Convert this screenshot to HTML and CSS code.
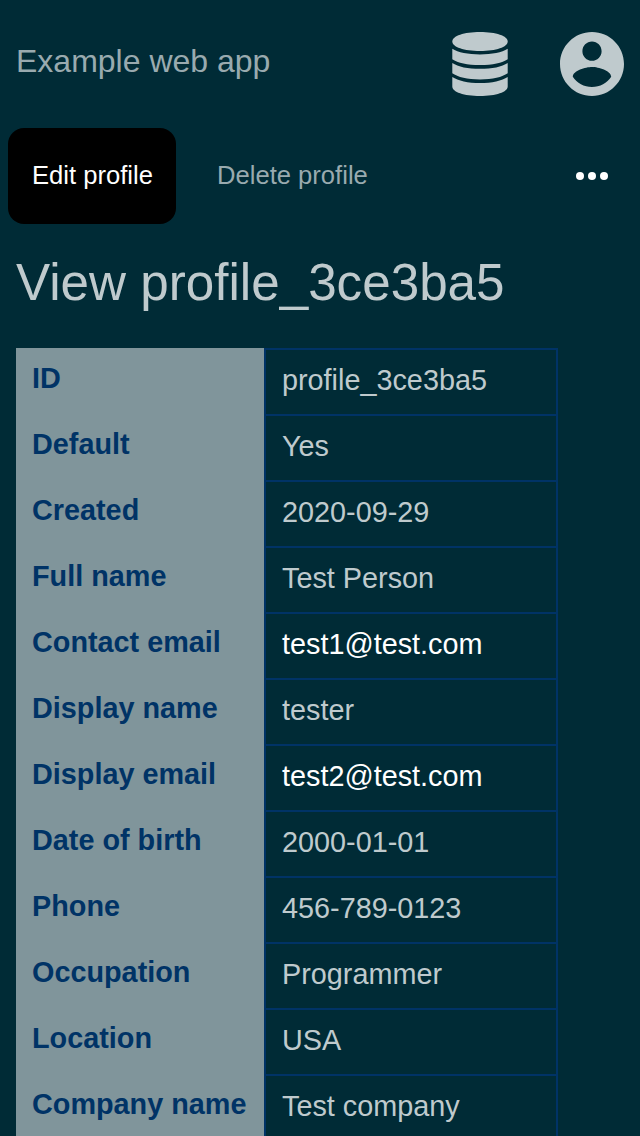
FILE: index.html
```html
<!DOCTYPE html>
<html lang="en">
<head>
<meta charset="utf-8">
<title>View profile_3ce3ba5</title>
<link rel="stylesheet" href="styles.css">
</head>
<body>
<header class="topbar">
  <span class="brand">Example web app</span>
  <nav class="icons">
    <svg class="icon" viewBox="0 0 64 64" aria-label="Database"><path d="M4.300 9.500C4.300 4 16 0 32 0s27.700 4 27.700 9.500C59.700 15 48 19 32 19S4.300 15 4.300 9.500z"/><path d="M4.300 16.700C10 20.300 20 22.400 32 22.400s22-2.100 27.700-5.700V27.200c-5.500 3.600-15 5.800-27.700 5.800S9.800 30.800 4.300 27.200z"/><path d="M4.300 30.900C10 34.800 20 36.800 32 36.800s22-2 27.700-5.900V41.200c-5.500 3.800-15 6.200-27.700 6.200S9.800 45 4.300 41.200z"/><path d="M4.300 44.900C10 48.600 20 51 32 51s22-2.400 27.700-6.100v9.600C59.700 60 48 64 32 64S4.300 60 4.300 54.500z"/></svg>
    <svg class="icon" viewBox="2 2 20 20" aria-label="Account"><path d="M12 2C6.480 2 2 6.480 2 12s4.480 10 10 10 10-4.480 10-10S17.520 2 12 2zm0 3c1.660 0 3 1.340 3 3s-1.340 3-3 3-3-1.340-3-3 1.340-3 3-3zm0 14.200c-2.500 0-4.710-1.280-6-3.220.030-1.990 4-3.080 6-3.080 1.990 0 5.970 1.090 6 3.080-1.290 1.940-3.500 3.220-6 3.220z"/></svg>
  </nav>
</header>
<nav class="actions">
  <a class="action active">Edit profile</a>
  <a class="action">Delete profile</a>
  <svg class="more" viewBox="0 0 32 8" aria-label="More"><circle cx="4" cy="4" r="4"/><circle cx="16" cy="4" r="4"/><circle cx="28" cy="4" r="4"/></svg>
</nav>
<main>
  <h1 class="title">View profile_3ce3ba5</h1>
  <dl class="details">
    <dt>ID</dt><dd>profile_3ce3ba5</dd>
    <dt>Default</dt><dd>Yes</dd>
    <dt>Created</dt><dd>2020-09-29</dd>
    <dt>Full name</dt><dd>Test Person</dd>
    <dt>Contact email</dt><dd><a class="mail">test1@test.com</a></dd>
    <dt>Display name</dt><dd>tester</dd>
    <dt>Display email</dt><dd><a class="mail">test2@test.com</a></dd>
    <dt>Date of birth</dt><dd>2000-01-01</dd>
    <dt>Phone</dt><dd>456-789-0123</dd>
    <dt>Occupation</dt><dd>Programmer</dd>
    <dt>Location</dt><dd>USA</dd>
    <dt>Company name</dt><dd>Test company</dd>
  </dl>
</main>
</body>
</html>
```
FILE: styles.css
```css
* { box-sizing: border-box; }
body {
  margin: 0;
  height: 1136px;
  overflow: hidden;
  background: #002b36;
  color: #bfcacd;
  font-family: "Liberation Sans", Arial, sans-serif;
}
.topbar {
  display: flex;
  justify-content: space-between;
  height: 128px;
  padding: 32px 16px;
}
.brand {
  padding-top: 11px;
  font-size: 32px;
  line-height: 36px;
  color: #99aaaf;
}
.icons { display: flex; gap: 48px; }
.icon { width: 64px; height: 64px; fill: #bfcacd; }
.actions {
  display: flex;
  align-items: center;
  gap: 17px;
  height: 96px;
  padding: 0 32px 0 8px;
}
.action {
  height: 96px;
  padding: 0 24px;
  border-radius: 16px;
  font-size: 25.6px;
  line-height: 94px;
  color: #99aaaf;
}
.active { width: 168px; background: #000; color: #fff; white-space: nowrap; }
.more { width: 32px; height: 8px; margin-left: auto; fill: #fff; }
.title {
  margin: 0;
  padding: 29px 16px 0;
  height: 124px;
  font-size: 51.2px;
  line-height: 60px;
  font-weight: 400;
}
.details {
  display: grid;
  grid-template-columns: 248px 294px;
  grid-auto-rows: 66px;
  margin: 0 16px;
  font-size: 28.8px;
  line-height: 32px;
}
dt {
  padding: 14px 16px;
  background: #80959b;
  color: #003366;
  font-weight: 700;
}
dd {
  margin: 0;
  padding: 14px 16px;
  border: 2px solid #003366;
  border-bottom: 0;
}
.mail { color: #fff; }
```
